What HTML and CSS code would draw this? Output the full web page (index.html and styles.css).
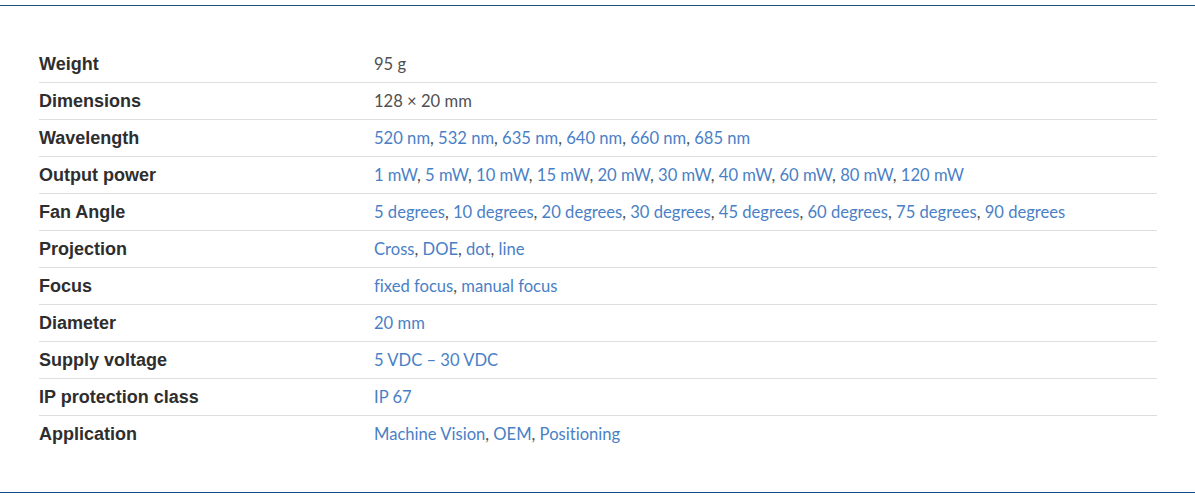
FILE: index.html
```html
<!DOCTYPE html>
<html lang="en">
<head>
<meta charset="utf-8">
<title>Specifications</title>
<link rel="stylesheet" href="styles.css">
</head>
<body>
<div class="page">
  <section class="specs">
    <table class="spec-table">
      <tbody>
        <tr><th>Weight</th><td class="plain">95 g</td></tr>
        <tr><th>Dimensions</th><td class="plain">128 × 20 mm</td></tr>
        <tr><th>Wavelength</th><td><a href="#">520 nm</a>, <a href="#">532 nm</a>, <a href="#">635 nm</a>, <a href="#">640 nm</a>, <a href="#">660 nm</a>, <a href="#">685 nm</a></td></tr>
        <tr><th>Output power</th><td><a href="#">1 mW</a>, <a href="#">5 mW</a>, <a href="#">10 mW</a>, <a href="#">15 mW</a>, <a href="#">20 mW</a>, <a href="#">30 mW</a>, <a href="#">40 mW</a>, <a href="#">60 mW</a>, <a href="#">80 mW</a>, <a href="#">120 mW</a></td></tr>
        <tr><th>Fan Angle</th><td><a href="#">5 degrees</a>, <a href="#">10 degrees</a>, <a href="#">20 degrees</a>, <a href="#">30 degrees</a>, <a href="#">45 degrees</a>, <a href="#">60 degrees</a>, <a href="#">75 degrees</a>, <a href="#">90 degrees</a></td></tr>
        <tr><th>Projection</th><td><a href="#">Cross</a>, <a href="#">DOE</a>, <a href="#">dot</a>, <a href="#">line</a></td></tr>
        <tr><th>Focus</th><td><a href="#">fixed focus</a>, <a href="#">manual focus</a></td></tr>
        <tr><th>Diameter</th><td><a href="#">20 mm</a></td></tr>
        <tr><th>Supply voltage</th><td><a href="#">5 VDC – 30 VDC</a></td></tr>
        <tr><th>IP protection class</th><td><a href="#">IP 67</a></td></tr>
        <tr><th>Application</th><td><a href="#">Machine Vision</a>, <a href="#">OEM</a>, <a href="#">Positioning</a></td></tr>
      </tbody>
    </table>
  </section>
</div>
</body>
</html>
```
FILE: styles.css
```css
html, body {
  margin: 0;
  padding: 0;
  background: #fff;
}

.page {
  padding-top: 5px;
}

.specs {
  border-top: 1px solid #1f4f7c;
  border-bottom: 1px solid #0f4c8a;
  padding: 40px 38px 40px 39px;
}

.spec-table {
  width: 1118px;
  border-collapse: collapse;
}

.spec-table tr {
  border-bottom: 1px solid #dddddd;
}

.spec-table tr:last-child {
  border-bottom: none;
}

.spec-table th,
.spec-table td {
  height: 36px;
  padding: 0;
  vertical-align: middle;
  text-align: left;
}

.spec-table th {
  width: 335px;
  font-family: "Liberation Sans", Arial, sans-serif;
  font-weight: bold;
  font-size: 18px;
  color: #2e2e2e;
}

.spec-table td {
  font-family: Lato, sans-serif;
  font-size: 16.6px;
  font-variant-ligatures: none;
  color: #505050;
}

.spec-table td a {
  color: #4a7fc6;
  text-decoration: none;
}
```
